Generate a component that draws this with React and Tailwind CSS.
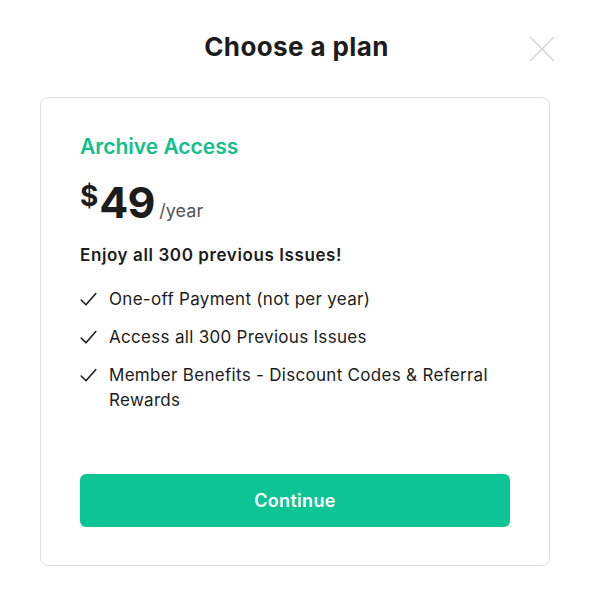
export default function App() {
  const features = [
    "One-off Payment (not per year)",
    "Access all 300 Previous Issues",
    "Member Benefits - Discount Codes & Referral Rewards",
  ];
  return (
    <div className="min-h-[600px] w-[593px] bg-white font-['Inter',sans-serif] text-[#1c1c1c]">
      <div className="relative pt-[30px]">
        <h1 className="text-center text-[26px] font-bold leading-[34px] tracking-[0.4px]">Choose a plan</h1>
        <button className="absolute right-[38px] top-[36px] h-[26px] w-[26px]" aria-label="Close">
          <svg viewBox="0 0 26 26" className="h-full w-full" fill="none" stroke="#d2d2d2" strokeWidth="1.3">
            <path d="M1 1L25 25M25 1L1 25" />
          </svg>
        </button>
      </div>
      <div className="mx-[40px] mt-[33px] w-[510px] rounded-[8px] border border-[#dedede] px-[39px] pt-[35px] pb-[38px]">
        <h2 className="text-[21px] font-semibold leading-[28px] text-[#12c08e]">Archive Access</h2>
        <div className="mt-[20px] flex items-end">
          <span className="self-start mt-[1px] text-[28px] font-bold leading-[28px]">$</span>
          <span className="ml-[1px] text-[43px] font-bold leading-[42px] tracking-[-1px]">49</span>
          <span className="ml-[5px] mb-[1px] text-[18px] leading-[22px] text-[#555]">/year</span>
        </div>
        <p className="mt-[19px] text-[17px] font-semibold leading-[26px] tracking-[0.6px]">Enjoy all 300 previous Issues!</p>
        <ul className="mt-[19px] flex flex-col gap-[13px]">
          {features.map((f) => (
            <li key={f} className="flex items-start text-[17px] leading-[25px] tracking-[0.3px]">
              <svg viewBox="0 0 17 15" className="mt-[5px] h-[15px] w-[17px] shrink-0" fill="none" stroke="#1c1c1c" strokeWidth="1.6" strokeLinecap="round" strokeLinejoin="round">
                <path d="M1.2 8L6 12.8L15.8 1.5" />
              </svg>
              <span className="ml-[12px]">{f}</span>
            </li>
          ))}
        </ul>
        <button className="mt-[61px] h-[53px] w-full rounded-[6px] bg-[#0dc495] text-[18px] font-semibold tracking-[0.3px] text-white">Continue</button>
      </div>
    </div>
  );
}
